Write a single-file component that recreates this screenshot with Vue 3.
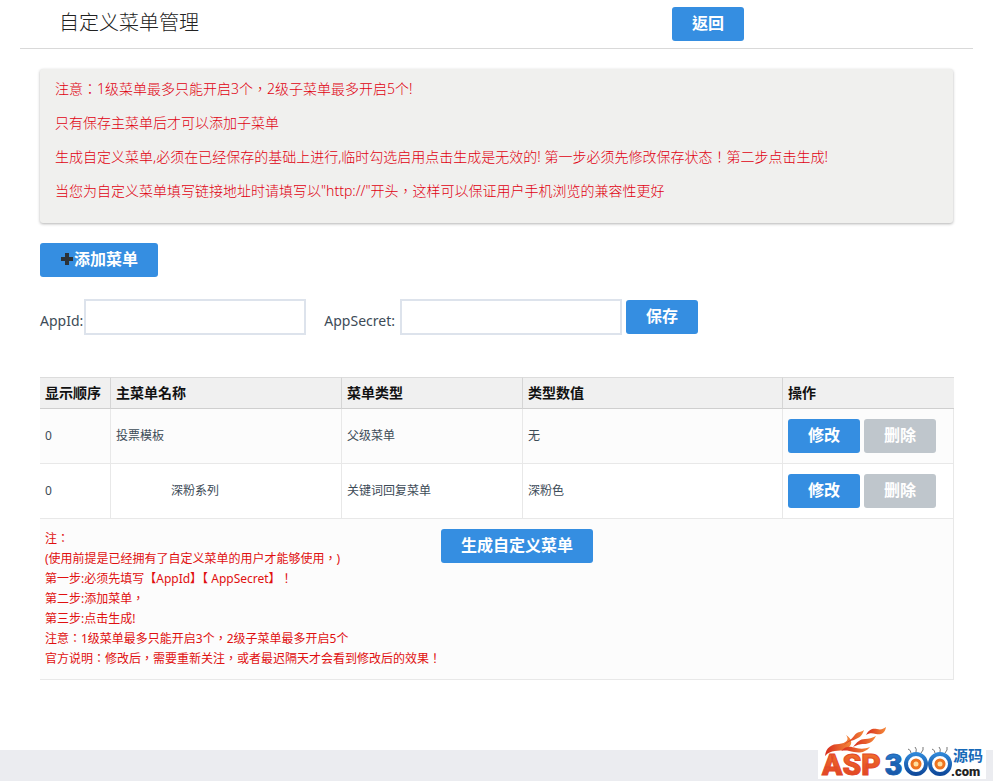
<script setup>
import { ref } from 'vue'

const notices = [
  '注意：1级菜单最多只能开启3个，2级子菜单最多开启5个!',
  '只有保存主菜单后才可以添加子菜单',
  '生成自定义菜单,必须在已经保存的基础上进行,临时勾选启用点击生成是无效的! 第一步必须先修改保存状态！第二步点击生成!',
  '当您为自定义菜单填写链接地址时请填写以"http://"开头，这样可以保证用户手机浏览的兼容性更好',
]
const columns = ['显示顺序', '主菜单名称', '菜单类型', '类型数值', '操作']
const rows = [
  { order: 0, name: '投票模板', type: '父级菜单', value: '无', child: false },
  { order: 0, name: '深粉系列', type: '关键词回复菜单', value: '深粉色', child: true },
]
const steps = [
  '注：',
  '(使用前提是已经拥有了自定义菜单的用户才能够使用，)',
  '第一步:必须先填写【AppId】【 AppSecret】！',
  '第二步:添加菜单，',
  '第三步:点击生成!',
  '注意：1级菜单最多只能开启3个，2级子菜单最多开启5个',
  '官方说明：修改后，需要重新关注，或者最迟隔天才会看到修改后的效果！',
]
const appId = ref('')
const appSecret = ref('')
</script>

<template>
  <div class="page">
    <header class="head">
      <h1>自定义菜单管理</h1>
      <button type="button" class="btn">返回</button>
    </header>

    <main>
      <section class="notice">
        <p v-for="n in notices" :key="n">{{ n }}</p>
      </section>

      <button type="button" class="btn add">
        <svg width="14" height="14" viewBox="0 0 14 14" aria-hidden="true">
          <path d="M5 1h4v4h4v4H9v4H5V9H1V5h4z" fill="#2b3238" />
        </svg>添加菜单
      </button>

      <form class="keys" @submit.prevent>
        <label for="app-id">AppId:</label>
        <input id="app-id" v-model="appId" type="text" />
        <label for="app-secret" class="second">AppSecret:</label>
        <input id="app-secret" v-model="appSecret" type="text" />
        <button type="submit" class="btn save">保存</button>
      </form>

      <table>
        <colgroup>
          <col class="c-order" />
          <col class="c-name" />
          <col class="c-type" />
          <col class="c-value" />
          <col class="c-action" />
        </colgroup>
        <thead>
          <tr>
            <th v-for="c in columns" :key="c" scope="col">{{ c }}</th>
          </tr>
        </thead>
        <tbody>
          <tr v-for="r in rows" :key="r.name">
            <td>{{ r.order }}</td>
            <td :class="{ child: r.child }">{{ r.name }}</td>
            <td>{{ r.type }}</td>
            <td>{{ r.value }}</td>
            <td>
              <div class="actions">
                <button type="button" class="btn">修改</button>
                <button type="button" class="btn muted">删除</button>
              </div>
            </td>
          </tr>
          <tr>
            <td colspan="5">
              <div class="generate">
                <div class="steps">
                  <p v-for="s in steps" :key="s">{{ s }}</p>
                </div>
                <button type="button" class="btn">生成自定义菜单</button>
              </div>
            </td>
          </tr>
        </tbody>
      </table>
    </main>

    <footer class="foot">
      <svg class="logo" width="168" height="54" viewBox="0 0 168 54" role="img" aria-label="ASP300源码.com">
        <defs>
          <linearGradient id="fire" x1="0" y1="0" x2="0" y2="1">
            <stop offset="0" stop-color="#f47a2c" />
            <stop offset="1" stop-color="#dd3a22" />
          </linearGradient>
          <linearGradient id="sea" x1="0" y1="0" x2="0" y2="1">
            <stop offset="0" stop-color="#2f86d6" />
            <stop offset="1" stop-color="#0f4a9c" />
          </linearGradient>
          <linearGradient id="flame" x1="0" y1="0" x2="1" y2="0">
            <stop offset="0" stop-color="#d62a1c" />
            <stop offset="1" stop-color="#f58a3a" />
          </linearGradient>
        </defs>
        <rect y="25" width="168" height="29" fill="#fff" />
        <g fill="url(#flame)">
          <path d="M7 31C8 22 14 19 21 19C28 18 32 15 28 10C35 14 35 21 28 24C20 27 13 24 7 31Z" />
          <path d="M26 20C31 15 33 15 36 11C39 6 42 8 46 5C44 12 40 13 36 15C32 16 30 17 26 20Z" />
          <path d="M48 10C51 4 55 3 59 4C63 5 65 4 68 2C67 9 62 10 58 9C54 8 51 8 48 10Z" />
          <path d="M35 22C39 17 42 14 47 14C51 14 54 13 58 11C55 17 51 19 46 19C41 19 39 20 35 22Z" />
          <path d="M23 26C29 20 33 22 38 23C43 24 47 24 52 22C47 28 41 28 36 27C31 26 28 25 23 26Z" />
        </g>
        <text class="word fire" x="4" y="50">ASP</text>
        <text class="word sea" x="67" y="50">3</text>
        <g v-for="x in [98, 122]" :key="x">
          <path
            :d="`M${x - 5} 28q0-3-3-4M${x} 27q1-3-1-5M${x + 5} 28q3-3 2-6`"
            fill="none" stroke="#777" stroke-width="1"
          />
          <ellipse :cx="x" cy="39" rx="10" ry="10" fill="#fff" stroke="url(#sea)" stroke-width="4" />
          <circle :cx="x" cy="39" r="4" fill="#ffe0a0" stroke="#ee7420" stroke-width="3" />
        </g>
        <text class="site" x="135" y="36">源码</text>
        <text class="dotcom" x="133" y="51">.com</text>
      </svg>
    </footer>
  </div>
</template>

<style>
body {
  margin: 0;
  background: #fff;
}
</style>

<style scoped>
.page {
  display: flex;
  flex-direction: column;
  min-height: 100vh;
  font-family: "Noto Sans", "Noto Sans CJK TC", sans-serif;
  font-size: 14px;
  color: #3d4b57;
}
.head {
  display: flex;
  justify-content: space-between;
  align-items: flex-start;
  margin: 0 20px;
  padding: 7px 229px 7px 39px;
  border-bottom: 1px solid #d9d9d9;
}
h1 {
  margin: 0;
  font-size: 20px;
  line-height: 32px;
  font-weight: 300;
  color: #222;
}
.btn {
  display: inline-flex;
  align-items: center;
  justify-content: center;
  height: 34px;
  padding: 0 20px 2px;
  border: 0;
  border-radius: 3px;
  background: #358ee1;
  color: #fff;
  font-family: inherit;
  font-size: 16px;
  line-height: 24px;
  font-weight: 700;
  white-space: nowrap;
}
.muted {
  background: #bfc6cc;
}
main {
  padding: 20px 39px 70px 40px;
}
.notice {
  margin: 0 1px 20px 0;
  padding: 8px 15px 10px;
  border-radius: 3px;
  background: #f0f0ee;
  box-shadow: 0 1px 3px rgba(0, 0, 0, 0.3);
  color: #e00010;
}
.notice p {
  margin: 0 0 10px;
  line-height: 24px;
  font-weight: 300;
}
.keys {
  display: flex;
  align-items: center;
  margin: 22px 0 42px;
}
.keys label {
  padding-top: 8px;
  padding-right: 1px;
  line-height: 20px;
}
.keys input {
  box-sizing: border-box;
  width: 222px;
  height: 36px;
  padding: 4px 8px;
  border: 2px solid #dde3ec;
  background: #fff;
  font: inherit;
  color: inherit;
}
.keys .second {
  margin: 0 4px 0 18px;
}
.save {
  margin-left: 4px;
}
table {
  width: 100%;
  table-layout: fixed;
  border-collapse: separate;
  border-spacing: 0;
}
.c-order {
  width: 70px;
}
.c-name {
  width: 231px;
}
.c-type {
  width: 181px;
}
.c-value {
  width: 260px;
}
th,
td {
  padding: 0 5px;
  text-align: left;
}
th + th {
  border-left: 1px solid #d5d5d5;
}
th {
  border-top: 1px solid #dcdcdc;
  border-bottom: 1px solid #cfcfcf;
  background: #f0f0f0;
  line-height: 30px;
  font-size: 14px;
  font-weight: 700;
  color: #111;
}
td {
  padding: 10px 5px;
  border-bottom: 1px solid #e8e8e8;
  font-size: 12px;
  line-height: 20px;
}
td + td {
  border-left: 1px solid #e8e8e8;
}
td:last-child {
  border-right: 1px solid #e8e8e8;
}
tbody tr:nth-child(odd) td {
  background: #fcfcfc;
}
.child {
  padding-left: 60px;
}
.actions {
  display: flex;
  gap: 4px;
}
.generate {
  display: flex;
  align-items: flex-start;
}
.steps {
  width: 396px;
  color: #e01010;
}
.steps p {
  margin: 0;
  white-space: nowrap;
}
.foot {
  position: relative;
  flex: 1;
  min-height: 31px;
  background: #ebecf0;
}
.logo {
  position: absolute;
  right: 7px;
  bottom: 2px;
  overflow: visible;
}
.word {
  font: 900 30px "Roboto", sans-serif;
  stroke-width: 1px;
}
.fire {
  fill: url(#fire);
  stroke: #e2492a;
}
.sea {
  fill: url(#sea);
  stroke: #1a5fb0;
}
.site {
  font: 700 15px "Noto Sans CJK SC", sans-serif;
  fill: #1769b8;
}
.dotcom {
  font: 900 13px "Roboto", sans-serif;
  fill: #222;
}
</style>
